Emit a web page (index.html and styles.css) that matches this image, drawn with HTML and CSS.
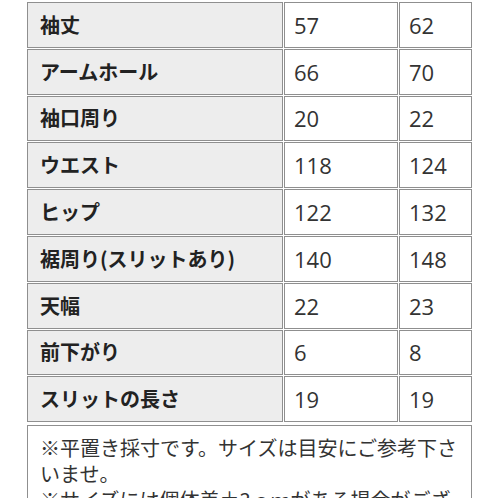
FILE: index.html
```html
<!DOCTYPE html>
<html lang="ja">
<head>
<meta charset="utf-8">
<link rel="stylesheet" href="styles.css">
</head>
<body>
<div class="page">
  <table class="size-table">
    <tbody>
      <tr><th>袖丈</th><td>57</td><td>62</td></tr>
      <tr><th>アームホール</th><td>66</td><td>70</td></tr>
      <tr><th>袖口周り</th><td>20</td><td>22</td></tr>
      <tr><th>ウエスト</th><td>118</td><td>124</td></tr>
      <tr><th>ヒップ</th><td>122</td><td>132</td></tr>
      <tr><th>裾周り(スリットあり)</th><td>140</td><td>148</td></tr>
      <tr><th>天幅</th><td>22</td><td>23</td></tr>
      <tr><th>前下がり</th><td>6</td><td>8</td></tr>
      <tr><th>スリットの長さ</th><td>19</td><td>19</td></tr>
    </tbody>
  </table>
  <div class="note">
    <p>※平置き採寸です。サイズは目安にご参考下さいませ。</p>
    <p>※サイズには個体差±3ｃｍがある場合がございます。</p>
  </div>
</div>
</body>
</html>
```

FILE: styles.css
```css
html, body {
  margin: 0;
  padding: 0;
  background: #ffffff;
}

body {
  width: 498px;
  height: 498px;
  overflow: hidden;
  font-family: "Noto Sans CJK JP", "Noto Sans", sans-serif;
}

.page {
  padding-left: 26px;
  padding-top: 1px;
  width: 447px;
}

.size-table {
  border-collapse: separate;
  border-spacing: 1px;
  table-layout: fixed;
  width: 447px;
  background: #ffffff;
}

.size-table th,
.size-table td {
  box-sizing: border-box;
  height: 45.8px;
  border: 1px solid #8f8f8f;
  padding: 0 0 0 12px;
  font-size: 20px;
  line-height: 24px;
  text-align: left;
  vertical-align: middle;
  white-space: nowrap;
}

.size-table th {
  width: 256px;
  background: #ededed;
  color: #222222;
  font-weight: 700;
}

.size-table td {
  background: #ffffff;
  color: #333333;
  font-weight: 400;
  font-family: "Open Sans", "Noto Sans CJK JP", sans-serif;
  font-size: 22px;
  padding-left: 9px;
}

.size-table td:nth-child(2) {
  width: 114px;
}

.size-table td:nth-child(3) {
  width: 73px;
}

.note {
  box-sizing: border-box;
  margin: 2px 0 0 1px;
  width: 445px;
  height: 120px;
  border: 1px solid #8f8f8f;
  border-bottom: none;
  padding: 9px 8px 0 12px;
  color: #333333;
  font-size: 20px;
  line-height: 26px;
}

.note p {
  margin: 0;
}
```
